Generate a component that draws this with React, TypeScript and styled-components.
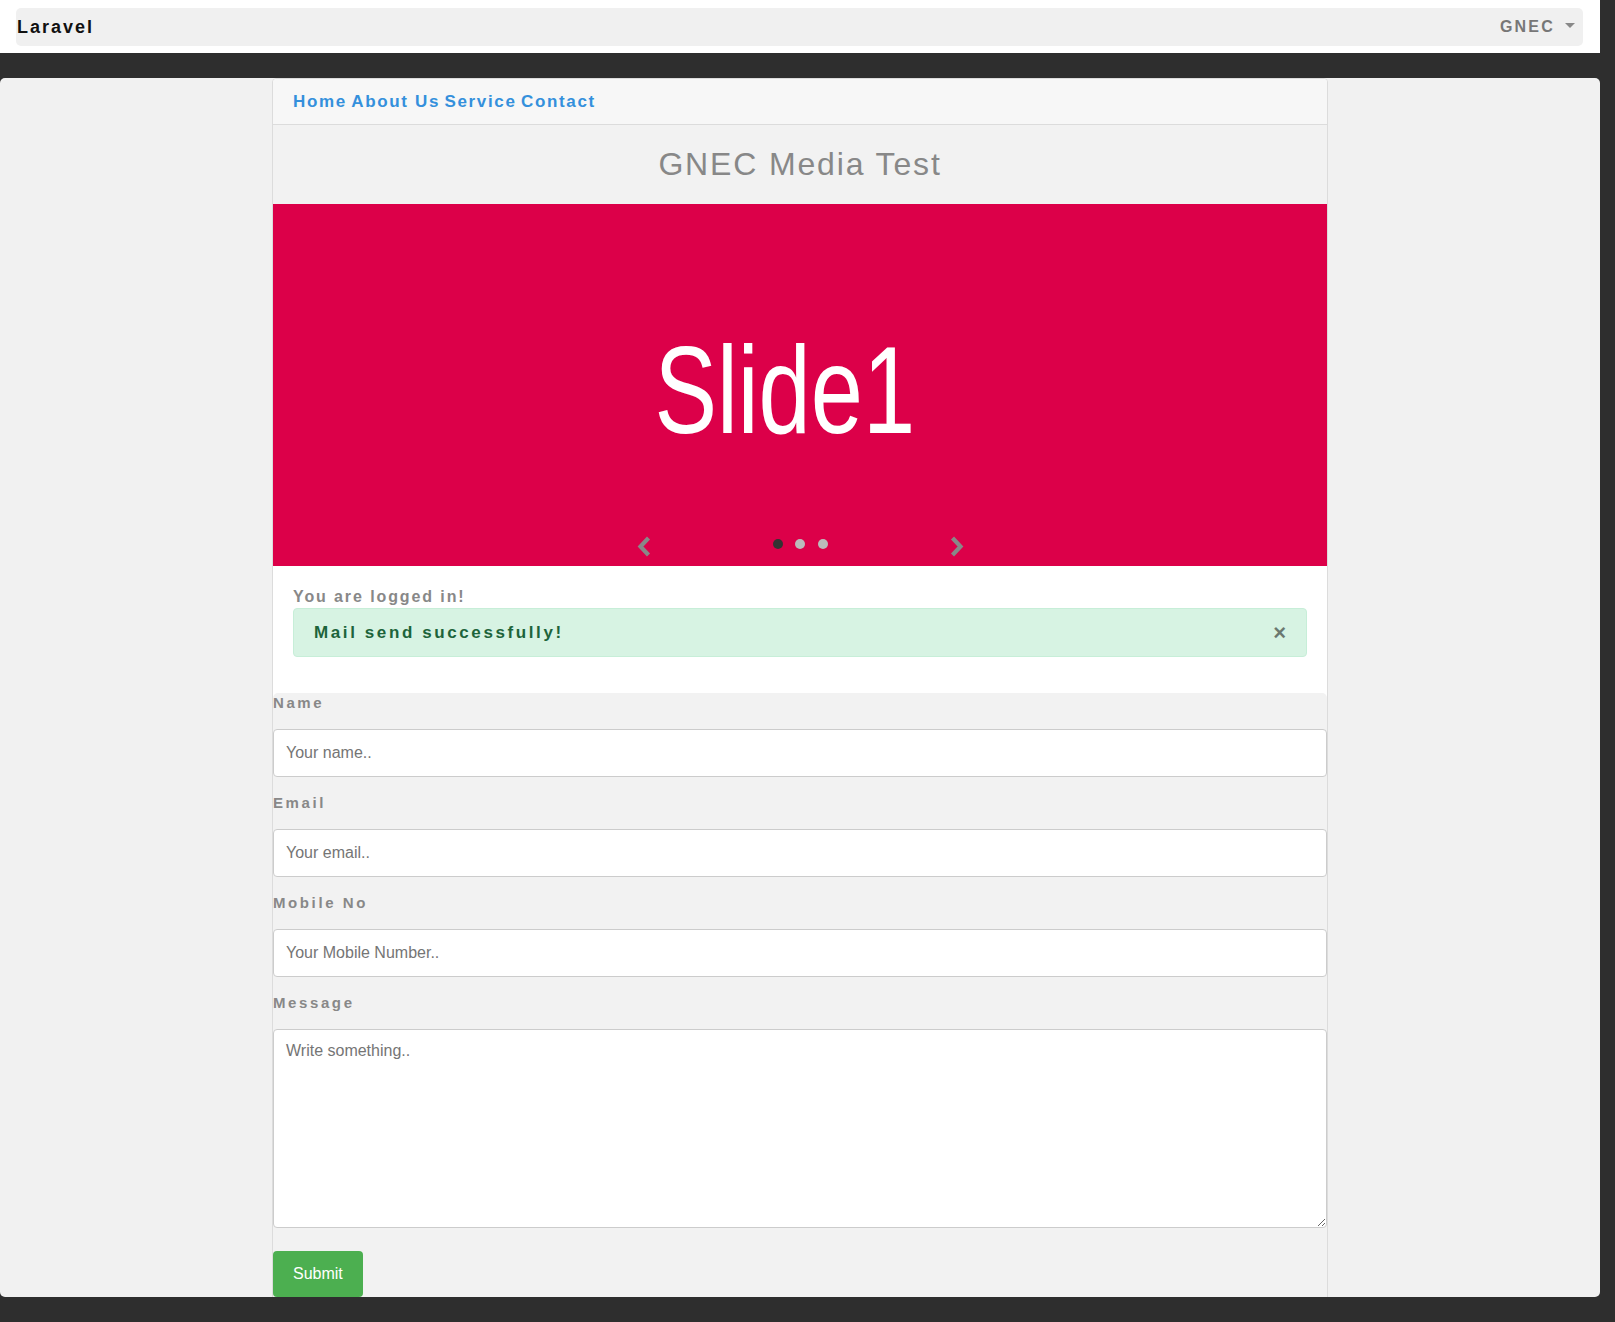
import React from 'react';
import styled, { createGlobalStyle } from 'styled-components';

const GlobalStyle = createGlobalStyle`
  html, body {
    margin: 0;
    padding: 0;
    background: #2e2e2e;
  }

  body {
    font-family: 'Liberation Sans', Arial, Helvetica, sans-serif;
  }

  * {
    box-sizing: border-box;
  }
`;

const Page = styled.div`
  width: 1600px;
  display: flex;
  flex-direction: column;
  gap: 25px;
`;

const TopBar = styled.header`
  background: #ffffff;
  height: 53px;
  padding: 8px 17px 7px 16px;
`;

const NavBox = styled.nav`
  height: 38px;
  background: #f0f0f0;
  border-radius: 5px;
  display: flex;
  align-items: center;
  justify-content: space-between;
  padding: 0 8px 0 1px;
`;

const Brand = styled.span`
  font-size: 18px;
  font-weight: 700;
  letter-spacing: 2px;
  color: #111111;
`;

const UserMenu = styled.span`
  display: flex;
  align-items: center;
  gap: 10px;
  font-size: 16px;
  font-weight: 700;
  letter-spacing: 2.2px;
  color: #777777;
`;

const Caret = styled.span`
  width: 0;
  height: 0;
  border-top: 5px solid #888888;
  border-left: 5px solid transparent;
  border-right: 5px solid transparent;
  margin-top: -3px;
`;

const Panel = styled.main`
  height: 1219px;
  background: #f1f1f1;
  border-radius: 5px;
  overflow: hidden;
  display: flex;
  justify-content: center;
`;

const Card = styled.section`
  width: 1056px;
  border: 1px solid #dcdcdc;
  border-radius: 4px;
  background: #ffffff;
  display: flex;
  flex-direction: column;
  align-self: flex-start;
`;

const CardHeader = styled.div`
  height: 46px;
  background: #f7f7f7;
  border-bottom: 1px solid #dcdcdc;
  border-radius: 4px 4px 0 0;
  display: flex;
  align-items: center;
  padding: 0 20px;
`;

const NavLink = styled.a`
  color: #3490dc;
  font-size: 17px;
  font-weight: 700;
  letter-spacing: 1.65px;
  text-decoration: none;
  cursor: pointer;
`;

const TitleBar = styled.div`
  height: 79px;
  background: #f2f2f2;
  display: flex;
  align-items: center;
  justify-content: center;
`;

const Title = styled.h1`
  margin: 0;
  font-size: 32px;
  font-weight: 400;
  letter-spacing: 1.85px;
  color: #888888;
`;

const Slide = styled.div`
  height: 362px;
  background: #dc0049;
  position: relative;
  display: flex;
  align-items: center;
  justify-content: center;
  padding: 8px 31px 0 0;
`;

const SlideText = styled.span`
  color: #ffffff;
  font-size: 125px;
  line-height: 1;
  transform: scaleX(0.75);
`;

const Controls = styled.div`
  position: absolute;
  left: 0;
  right: 0;
  bottom: 9px;
  display: flex;
  justify-content: center;
  align-items: flex-start;
  gap: 122px;
`;

const Arrow = styled.svg`
  display: block;
  cursor: pointer;
`;

const Dots = styled.div`
  display: flex;
  gap: 12.5px;
  margin-top: 2.5px;
`;

const Dot = styled.span<{ $active?: boolean }>`
  width: 10px;
  height: 10px;
  border-radius: 50%;
  background: ${p => (p.$active ? '#333333' : '#bbbbbb')};
`;

const Welcome = styled.div`
  background: #ffffff;
  padding: 21px 20px 20px;
`;

const LoggedIn = styled.div`
  font-size: 16px;
  line-height: 20px;
  font-weight: 700;
  letter-spacing: 1.9px;
  color: #888888;
`;

const Alert = styled.div`
  position: relative;
  margin: 1px 0 16px;
  padding: 11px 20px;
  background: #d7f3e3;
  border: 1px solid #c7eed8;
  border-radius: 4px;
  color: #1d643b;
  font-size: 17px;
  line-height: 25px;
  font-weight: 700;
  letter-spacing: 2.6px;
`;

const CloseButton = styled.span`
  position: absolute;
  right: 20px;
  top: 50%;
  transform: translateY(-52%);
  font-size: 22px;
  line-height: 1;
  font-weight: 700;
  letter-spacing: 0;
  color: #000000;
  opacity: 0.5;
  cursor: pointer;
`;

const ContactForm = styled.form`
  background: #f2f2f2;
  border-radius: 5px;
  padding-bottom: 40px;
`;

const FieldLabel = styled.label`
  display: block;
  font-size: 15px;
  line-height: 20px;
  font-weight: 700;
  letter-spacing: 2.6px;
  color: #888888;
`;

const TextInput = styled.input`
  display: block;
  width: 100%;
  height: 48px;
  margin: 16px 0;
  padding: 12px;
  border: 1px solid #cccccc;
  border-radius: 4px;
  background: #ffffff;
  font-family: 'Liberation Sans', Arial, sans-serif;
  font-size: 16px;
  color: #333333;

  &::placeholder {
    color: #757575;
  }
`;

const TextArea = styled.textarea`
  display: block;
  width: 100%;
  height: 199px;
  margin: 16px 0 23px;
  padding: 12px;
  border: 1px solid #cccccc;
  border-radius: 4px;
  background: #ffffff;
  font-family: 'Liberation Sans', Arial, sans-serif;
  font-size: 16px;
  color: #333333;
  resize: vertical;

  &::placeholder {
    color: #757575;
  }
`;

const SubmitButton = styled.button`
  height: 46px;
  padding: 0 20px;
  background: #4caf50;
  color: #ffffff;
  border: none;
  border-radius: 4px;
  font-family: 'Liberation Sans', Arial, sans-serif;
  font-size: 16px;
  cursor: pointer;
`;

const ChevronLeft = () => (
  <Arrow width="14" height="21" viewBox="0 0 14 21">
    <polyline points="11.5,2 3.5,10.5 11.5,19" fill="none" stroke="#888888" strokeWidth="4.2" />
  </Arrow>
);

const ChevronRight = () => (
  <Arrow width="14" height="21" viewBox="0 0 14 21">
    <polyline points="2.5,2 10.5,10.5 2.5,19" fill="none" stroke="#888888" strokeWidth="4.2" />
  </Arrow>
);

const fields = [
  { label: 'Name', placeholder: 'Your name..' },
  { label: 'Email', placeholder: 'Your email..' },
  { label: 'Mobile No', placeholder: 'Your Mobile Number..' },
];

const App: React.FC = () => {
  const links = ['Home', 'About Us', 'Service', 'Contact'];

  return (
    <>
      <GlobalStyle />
      <Page>
        <TopBar>
          <NavBox>
            <Brand>Laravel</Brand>
            <UserMenu>
              GNEC
              <Caret />
            </UserMenu>
          </NavBox>
        </TopBar>
        <Panel>
          <Card>
            <CardHeader>
              <div>
                {links.map((l, i) => (
                  <React.Fragment key={l}>
                    {i > 0 && ' '}
                    <NavLink>{l}</NavLink>
                  </React.Fragment>
                ))}
              </div>
            </CardHeader>
            <TitleBar>
              <Title>GNEC Media Test</Title>
            </TitleBar>
            <Slide>
              <SlideText>Slide1</SlideText>
              <Controls>
                <ChevronLeft />
                <Dots>
                  <Dot $active />
                  <Dot />
                  <Dot />
                </Dots>
                <ChevronRight />
              </Controls>
            </Slide>
            <Welcome>
              <LoggedIn>You are logged in!</LoggedIn>
              <Alert>
                Mail send successfully!
                <CloseButton>×</CloseButton>
              </Alert>
            </Welcome>
            <ContactForm onSubmit={e => e.preventDefault()}>
              {fields.map(f => (
                <React.Fragment key={f.label}>
                  <FieldLabel>{f.label}</FieldLabel>
                  <TextInput type="text" placeholder={f.placeholder} />
                </React.Fragment>
              ))}
              <FieldLabel>Message</FieldLabel>
              <TextArea placeholder="Write something.." />
              <SubmitButton type="submit">Submit</SubmitButton>
            </ContactForm>
          </Card>
        </Panel>
      </Page>
    </>
  );
};

export default App;
